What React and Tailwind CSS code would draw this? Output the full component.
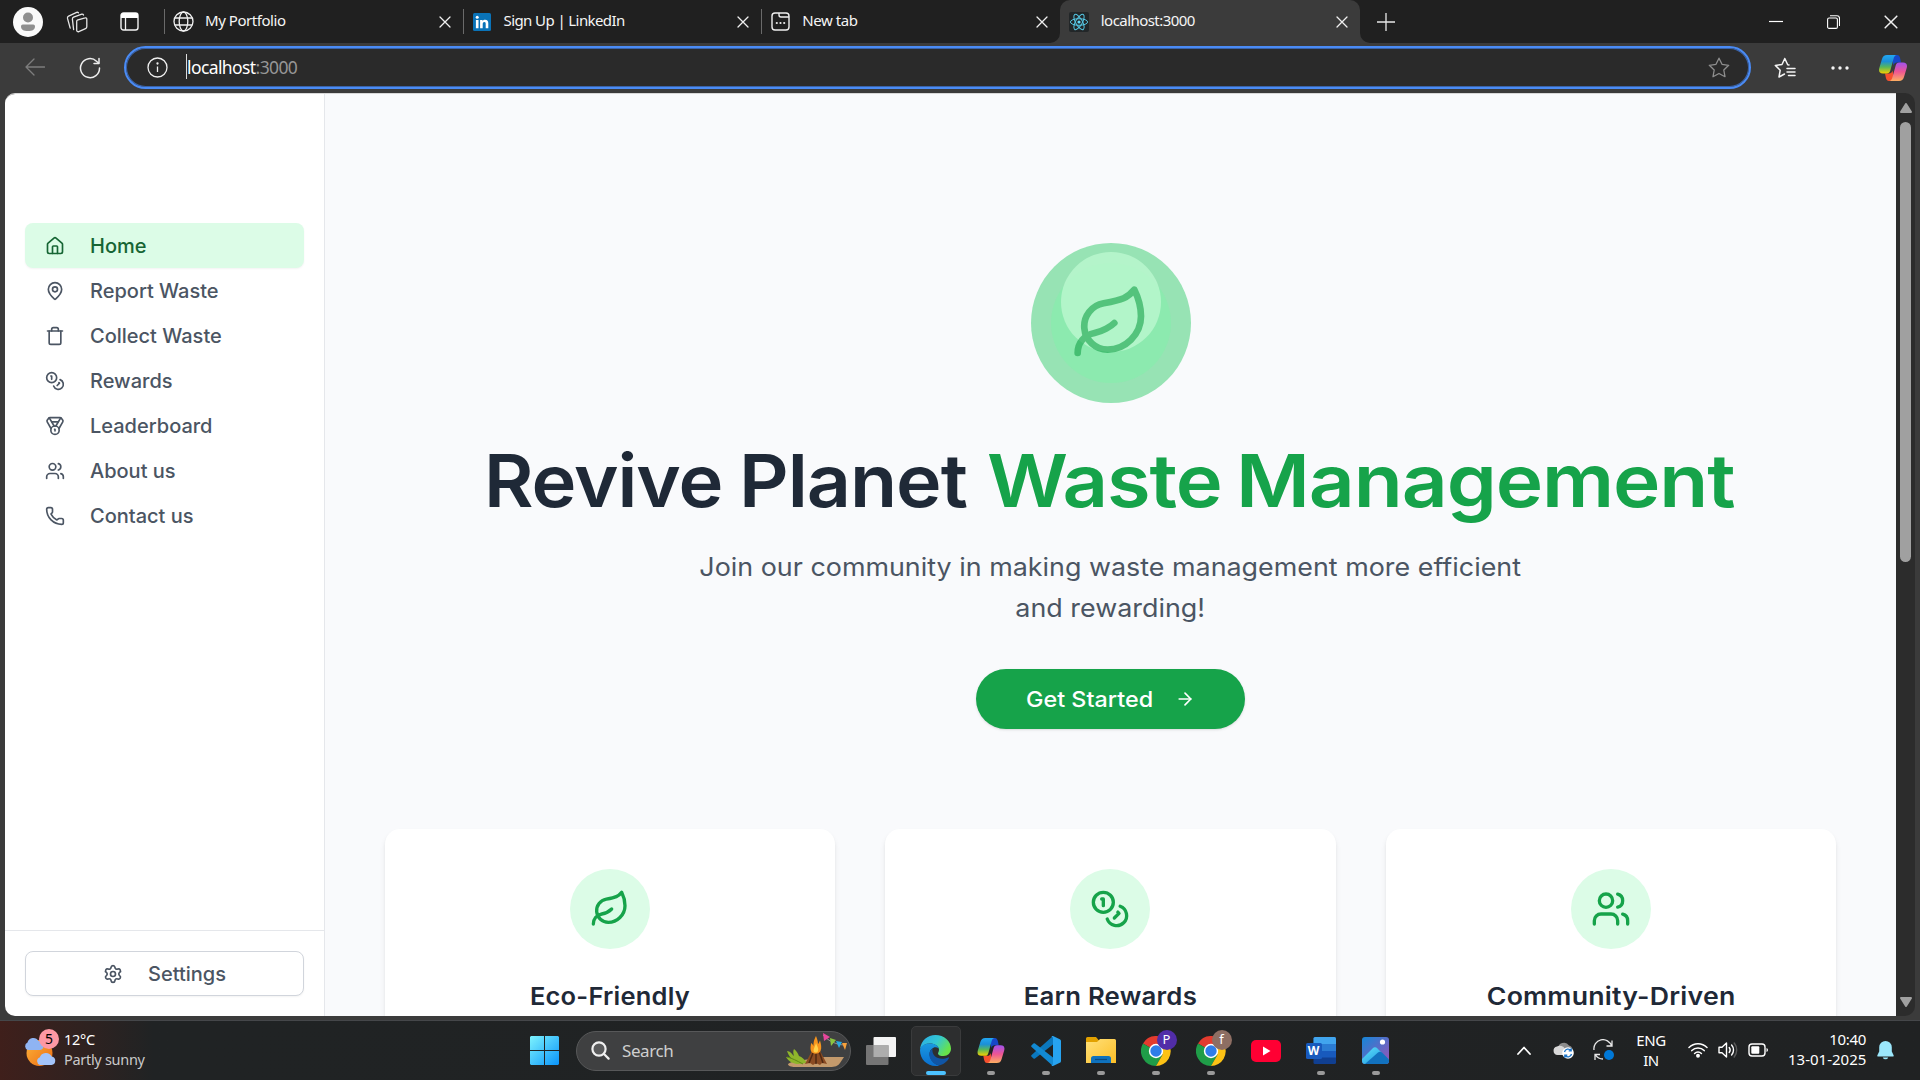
import React from "react";
import {
  House, MapPin, Trash, Coins, Medal, Users, Phone, Settings, Leaf, ArrowRight,
} from "lucide-react";

const UI = "font-['Noto_Sans','Open_Sans',sans-serif]";

/* ---------- Browser icons ---------- */

const CloseX = ({ size = 12 }) => (
  <svg width={size} height={size} viewBox="0 0 12 12" fill="none" stroke="#f0f0f0" strokeWidth="1.3" strokeLinecap="round">
    <path d="M1 1l10 10M11 1L1 11" />
  </svg>
);

const Workspaces = () => (
  <svg width="22" height="22" viewBox="0 0 22 22" fill="none" stroke="#e6e6e6" strokeWidth="1.3" strokeLinejoin="round" strokeLinecap="round">
    <path d="M11.200 9.200l8-2.300a1.200 1.200 0 0 1 1.600 1.200v7.700a2 2 0 0 1-1.300 1.900l-6.700 2.900a1.500 1.500 0 0 1-2.100-1.400v-8.500a1.500 1.500 0 0 1 .5-1.500z" />
    <path d="M7.600 18.500L6.400 8.200a2 2 0 0 1 1.200-2l8.200-3a1.500 1.500 0 0 1 1.700.9" />
    <path d="M4.200 17.200L1.500 7.400a2 2 0 0 1 1.100-2.300L10.700 1.400a1.500 1.500 0 0 1 1.700.3" />
  </svg>
);

const VerticalTabs = () => (
  <svg width="19" height="19" viewBox="0 0 19 19" fill="none">
    <rect x="1" y="1" width="17" height="17" rx="2.500" stroke="#f2f2f2" strokeWidth="1.400" />
    <path d="M1 6V3.500A2.500 2.500 0 0 1 3.500 1h12A2.500 2.500 0 0 1 18 3.500V6z" fill="#fff" />
    <path d="M5.500 6v12" stroke="#f2f2f2" strokeWidth="1.300" />
  </svg>
);

const Globe = () => (
  <svg width="21" height="21" viewBox="0 0 21 21" fill="none" stroke="#f0f0f0" strokeWidth="1.300">
    <circle cx="10.500" cy="10.500" r="9.500" />
    <ellipse cx="10.500" cy="10.500" rx="4.300" ry="9.500" />
    <path d="M1.800 7h17.400M1.800 14h17.400" />
  </svg>
);

const LinkedIn = () => (
  <svg width="18" height="18" viewBox="0 0 18 18">
    <rect width="18" height="18" rx="1.500" fill="#0a73b8" />
    <circle cx="4.200" cy="4.300" r="1.500" fill="#fff" />
    <path d="M2.900 7h2.600v8.200H2.900zM7.100 7h2.500v1.200c.5-.9 1.400-1.400 2.600-1.400 2.200 0 3.100 1.300 3.100 3.700v4.700h-2.600v-4.300c0-1.200-.3-1.900-1.300-1.900-1.100 0-1.700.8-1.700 2v4.200H7.100z" fill="#fff" />
  </svg>
);

const NewTabIcon = () => (
  <svg width="19" height="19" viewBox="0 0 19 19" fill="none" stroke="#f0f0f0" strokeWidth="1.400">
    <rect x="1" y="1" width="17" height="17" rx="3" />
    <path d="M8 1v2a2 2 0 0 0 2 2h8" />
    <g fill="#f0f0f0" stroke="none">
      <circle cx="5.800" cy="11" r="1.100" /><circle cx="9.500" cy="11" r="1.100" /><circle cx="13.200" cy="11" r="1.100" />
    </g>
  </svg>
);

const ReactIcon = () => (
  <svg width="20" height="20" viewBox="0 0 20 20" fill="none">
    <rect width="20" height="20" rx="2" fill="#222628" />
    <g stroke="#55c6e3" strokeWidth="1">
      <ellipse cx="10" cy="10" rx="8.600" ry="3.300" />
      <ellipse cx="10" cy="10" rx="8.600" ry="3.300" transform="rotate(60 10 10)" />
      <ellipse cx="10" cy="10" rx="8.600" ry="3.300" transform="rotate(120 10 10)" />
    </g>
    <circle cx="10" cy="10" r="1.600" fill="#61dafb" />
  </svg>
);

const Copilot = ({ id, w = 28, h = 26 }) => (
  <svg width={w} height={h} viewBox="0 0 28 26">
    <defs>
      <linearGradient id={id + "a"} x1="0" y1="0" x2="0" y2="1">
        <stop offset="0" stopColor="#22a7f2" /><stop offset=".35" stopColor="#1b8fd8" />
        <stop offset=".65" stopColor="#57b75a" /><stop offset="1" stopColor="#f5d000" />
      </linearGradient>
      <linearGradient id={id + "b"} x1="0" y1="0" x2="0" y2="1">
        <stop offset="0" stopColor="#a052ee" /><stop offset=".5" stopColor="#ee5593" />
        <stop offset="1" stopColor="#fdaf62" />
      </linearGradient>
    </defs>
    <path d="M13 0h5c2 0 2.600 1.500 3.200 3.500L22 7.500h-4c-2 0-3 1-3.600 3z" fill="#1747c8" />
    <path d="M15 26h-5c-2 0-2.600-1.500-3.200-3.500L6 18.500h4c2 0 3-1 3.600-3z" fill="#f5502e" />
    <path d="M8 0h9.500c-1.800.4-2.500 2-3 4l-3.200 11.500c-.6 2-1.600 3-3.600 3H4c-3.400 0-4.600-2-3.700-5.500L3 4C3.800 1.300 5.300 0 8 0z" fill={`url(#${id}a)`} />
    <path d="M20 26h-9.500c1.800-.4 2.500-2 3-4l3.200-11.500c.6-2 1.600-3 3.600-3H24c3.400 0 4.600 2 3.700 5.500L25 22c-.8 2.700-2.300 4-5 4z" fill={`url(#${id}b)`} />
  </svg>
);

/* ---------- Browser chrome ---------- */

function Tab({ icon, title, active, titleClass }) {
  return (
    <div
      className={
        "relative flex h-[43px] shrink-0 items-center " +
        (active ? "w-[300px] rounded-t-[10px] bg-[#3b3b3b]" : "w-[298.600px]")
      }
    >
      {!active && <div className="absolute left-0 top-[9px] h-[25px] w-px bg-[#6a6a6a]" />}
      {active && (
        <>
          <svg className="absolute -left-[10px] bottom-0" width="10" height="10"><path d="M10 0v10H0A10 10 0 0 0 10 0z" fill="#3b3b3b" /></svg>
          <svg className="absolute -right-[10px] bottom-0" width="10" height="10"><path d="M0 0v10h10A10 10 0 0 1 0 0z" fill="#3b3b3b" /></svg>
        </>
      )}
      <div className="ml-[9px] flex w-[21px] shrink-0 justify-center">{icon}</div>
      <div className={"ml-[11px] flex-1 whitespace-nowrap pb-[4px] text-[15px] leading-5 text-[#f5f5f5] " + titleClass}>{title}</div>
      <div className="mr-[12px] flex">
        <CloseX />
      </div>
    </div>
  );
}

function TabBar() {
  return (
    <div className={"flex h-[43px] shrink-0 items-center bg-[#202020] " + UI}>
      <div className="ml-[13px] flex h-[30px] w-[30px] items-center justify-center rounded-full bg-[#fafafa]">
        <svg width="16" height="20" viewBox="0 0 16 20" fill="#8f8f8f">
          <circle cx="8" cy="5.500" r="5" />
          <path d="M1 14.200A1.800 1.800 0 0 1 2.800 12.400h10.400A1.800 1.800 0 0 1 15 14.200C15 17.500 12.500 19 8 19s-7-1.500-7-4.800z" />
        </svg>
      </div>
      <div className="ml-[23px]"><Workspaces /></div>
      <div className="ml-[32px]"><VerticalTabs /></div>
      <div className="w-[25px] shrink-0" />
      <Tab icon={<Globe />} title="My Portfolio" titleClass="tracking-[-0.45px]" />
      <Tab icon={<LinkedIn />} title="Sign Up | LinkedIn" titleClass="tracking-[-0.6px]" />
      <Tab icon={<NewTabIcon />} title="New tab" titleClass="tracking-[-0.4px]" />
      <Tab icon={<ReactIcon />} title="localhost:3000" active titleClass="tracking-[-0.55px]" />
      <svg className="ml-[17px]" width="18" height="18" viewBox="0 0 18 18" stroke="#e8e8e8" strokeWidth="1.300"><path d="M9 0v18M0 9h18" /></svg>
      <div className="flex-1" />
      <div className="mr-[22px] flex items-center">
        <svg width="14" height="14" viewBox="0 0 14 14" stroke="#fff" strokeWidth="1.200"><path d="M0 6.500h14" /></svg>
        <svg className="ml-[44px]" width="13" height="14" viewBox="0 0 13 14" fill="none" stroke="#fff" strokeWidth="1.100">
          <rect x=".6" y="3" width="9.800" height="10.400" rx="1.500" />
          <path d="M3 .8h7a2.500 2.500 0 0 1 2.500 2.500v7.700" />
        </svg>
        <div className="ml-[44px]"><CloseX size={14} /></div>
      </div>
    </div>
  );
}

function AddressBar() {
  return (
    <div className={"flex h-[50px] shrink-0 items-center bg-[#3b3b3b] " + UI}>
      <svg className="mb-[2px] ml-[25px]" width="20" height="18" viewBox="0 0 20 18" fill="none" stroke="#7d7d7d" strokeWidth="1.300" strokeLinecap="round" strokeLinejoin="round"><path d="M19.500 9H1M9 1L1 9l8 8" /></svg>
      <svg className="mb-[1px] ml-[34px]" width="22" height="22" viewBox="0 0 22 22" fill="none" stroke="#eee" strokeWidth="1.500" strokeLinecap="round" strokeLinejoin="round">
        <path d="M20.500 11A9.500 9.500 0 1 1 17.500 4.200L19.500 6" /><path d="M20 1.500V6.500h-5" />
      </svg>
      <div className="mb-[1px] ml-[23px] flex h-[43px] w-[1627px] items-center rounded-full border-2 border-[#4a8bf5] bg-[#2a2a2a] pl-[21px] pr-[19px] shadow-[inset_0_0_0_1px_#3a63a8]">
        <svg width="21" height="21" viewBox="0 0 21 21" fill="none" stroke="#f0f0f0" strokeWidth="1.300">
          <circle cx="10.500" cy="10.500" r="9.500" /><path d="M10.500 9.500v5.500" /><circle cx="10.500" cy="6.500" r=".5" fill="#f0f0f0" />
        </svg>
        <div className="mb-[3px] ml-[18px] h-[25px] w-px bg-[#dcdcdc]" />
        <div className="whitespace-nowrap pb-[1px] text-[17.500px] leading-6 tracking-[-0.6px] text-white">
          localhost<span className="text-[#969696]">:3000</span>
        </div>
        <div className="flex-1" />
        <svg width="22" height="21" viewBox="0 0 22 21" fill="none" stroke="#8e8e8e" strokeWidth="1.300" strokeLinejoin="round"><path d="M11 1.200l3 6.100 6.700 1-4.900 4.700 1.200 6.700-6-3.200-6 3.200 1.200-6.700L1.300 8.300l6.700-1z" /></svg>
      </div>
      <svg className="ml-[23px]" width="22" height="22" viewBox="0 0 22 22" fill="none" stroke="#f5f5f5" strokeWidth="1.500" strokeLinejoin="round" strokeLinecap="round">
        <path d="M15 8l-1.300-.2L10.800 1.500 8 7.500 1.300 8.400l4.900 4.800L5 20l5.500-3" /><path d="M13 11.500h8M13 15h8M14.500 18.500H21" />
      </svg>
      <svg className="mb-[1px] ml-[35px]" width="18" height="4" viewBox="0 0 18 4" fill="#f5f5f5"><circle cx="2" cy="2" r="1.700" /><circle cx="9" cy="2" r="1.700" /><circle cx="16" cy="2" r="1.700" /></svg>
      <div className="ml-[30px]"><Copilot id="cpA" /></div>
    </div>
  );
}

/* ---------- Web page ---------- */

const NAV = [
  { label: "Home", Icon: House, active: true },
  { label: "Report Waste", Icon: MapPin },
  { label: "Collect Waste", Icon: Trash },
  { label: "Rewards", Icon: Coins },
  { label: "Leaderboard", Icon: Medal },
  { label: "About us", Icon: Users },
  { label: "Contact us", Icon: Phone },
];

function Sidebar() {
  return (
    <aside className="flex w-[320px] shrink-0 flex-col border-r border-gray-200 bg-white font-['Inter',sans-serif] text-[20px] font-medium text-[#4b5563]">
      <nav className="flex flex-1 flex-col px-[20px] pt-[129px]">
        {NAV.map(({ label, Icon, active }) => (
          <a
            key={label}
            className={
              "flex h-[45px] items-center rounded-[8px] pl-[20px] " +
              (active ? "bg-[#dcfce7] text-[#166534] shadow-xs" : "")
            }
          >
            <Icon size={20} />
            <span className="ml-[25px]">{label}</span>
          </a>
        ))}
      </nav>
      <div className="h-[86px] border-t border-gray-200 px-[20px] pt-[20px]">
        <button className="flex h-[45px] w-full items-center justify-center rounded-[8px] border border-gray-300 bg-white shadow-xs">
          <Settings size={20} />
          <span className="ml-[25px]">Settings</span>
        </button>
      </div>
    </aside>
  );
}

const FEATURES = [
  { title: "Eco-Friendly", Icon: Leaf, stretch: "scale-x-[1.04]" },
  { title: "Earn Rewards", Icon: Coins, stretch: "scale-x-[1.052]" },
  { title: "Community-Driven", Icon: Users, stretch: "scale-x-[1.09]" },
];

function Main() {
  return (
    <main className="flex flex-1 flex-col items-center overflow-hidden bg-[#f9fafc] px-[60px] pt-[149px] font-['Inter',sans-serif]">
      <div className="relative h-[160px] w-[160px] shrink-0 rounded-full bg-[#97e3b4]">
        <div className="absolute inset-[20px] rounded-full bg-[#86efac] opacity-60" />
        <div className="absolute left-[30px] top-[9px] h-[100px] w-[100px] rounded-full bg-[#bbf7d0] opacity-80" />
        <Leaf size={80} className="absolute left-[40px] top-[40px] text-[#16a34a] opacity-60" />
      </div>
      <h1 className="mt-[32px] flex h-[90px] w-[1254px] shrink-0 items-center whitespace-nowrap text-[73px] font-semibold leading-none tracking-[-1px] text-[#1f2937]">
        <span className="w-[255.500px] origin-left scale-x-[1.04]">Revive</span>
        <span className="w-[248px] origin-left scale-x-[1.056]">Planet</span>
        <span className="w-[249px] origin-left scale-x-[1.088] text-[#16a34a]">Waste</span>
        <span className="w-[501px] origin-left scale-x-[1.098] text-[#16a34a]">Management</span>
      </h1>
      <p className="mt-[22px] shrink-0 scale-x-[1.075] whitespace-nowrap text-center text-[25px] leading-[41px] text-[#4b5563]">
        Join our community in making waste management more efficient
        <br />
        and rewarding!
      </p>
      <button className="mt-[40px] flex h-[60px] w-[269px] shrink-0 items-center rounded-full bg-[#16a34a] pl-[50px] text-[22px] font-medium text-white shadow-sm">
        <span className="origin-left scale-x-[1.062]">Get Started</span>
        <ArrowRight size={20} className="ml-auto mr-[50px]" />
      </button>
      <section className="mt-[100px] grid w-full shrink-0 grid-cols-3 gap-[50px]">
        {FEATURES.map(({ title, Icon, stretch }) => (
          <div key={title} className="flex h-[300px] flex-col items-center rounded-[15px] bg-white pt-[40px] shadow-md">
            <div className="flex h-[80px] w-[80px] items-center justify-center rounded-full bg-[#dcfce7] text-[#16a34a]">
              <Icon size={40} />
            </div>
            <h3 className={"mt-[30px] whitespace-nowrap text-[24.500px] font-semibold leading-[35px] tracking-[0.2px] text-[#1f2937] " + stretch}>{title}</h3>
          </div>
        ))}
      </section>
    </main>
  );
}

function Scrollbar() {
  return (
    <div className="flex w-[19px] shrink-0 flex-col items-center rounded-r-[10px] bg-[#2c2c2c]">
      <svg className="mt-[10px]" width="12" height="10" viewBox="0 0 12 10"><path d="M6 1L11 9H1z" fill="#a0a0a0" stroke="#a0a0a0" strokeWidth="2" strokeLinejoin="round" /></svg>
      <div className="mt-[9px] h-[440px] w-[11px] rounded-full bg-[#a0a0a0]" />
      <div className="flex-1" />
      <svg className="mb-[9px]" width="12" height="10" viewBox="0 0 12 10"><path d="M6 9L11 1H1z" fill="#a0a0a0" stroke="#a0a0a0" strokeWidth="2" strokeLinejoin="round" /></svg>
    </div>
  );
}

/* ---------- Taskbar ---------- */

const StartIcon = () => (
  <svg width="29" height="29" viewBox="0 0 29 29">
    <defs><linearGradient id="st" x1="0" y1="0" x2="29" y2="29" gradientUnits="userSpaceOnUse"><stop offset="0" stopColor="#7df3fd" /><stop offset="1" stopColor="#0a94fa" /></linearGradient></defs>
    <path fill="url(#st)" d="M1 0h13v14H0V1zM15 0h13l1 1v13H15zM0 15h14v14H1l-1-1zM15 15h14v13l-1 1H15z" />
  </svg>
);

const Campfire = () => (
  <svg width="62" height="36" viewBox="0 0 62 36">
    <path d="M3 31c4-3 10-3 16-4 8-1 14-3 21-3h19l-4 6c-2 3-5 4-10 4H10c-4 0-7-1-7-3z" fill="#c49a6c" />
    <path d="M13 31c-4 0-9-2-12-7 3 0 4 1 6 2-3-3-4-5-5-8 3 0 5 3 7 5-1-3-1-5 0-7 3 2 4 5 5 7 3 1 6 4 8 7z" fill="#8fb52b" />
    <path d="M2 24c5 1 10 4 16 7" stroke="#5f8a14" fill="none" />
    <path d="M20 31l9-17h4l9 17-5-1-2 2-4-2-3 2-3-2z" fill="#8a4b22" />
    <path d="M24 30l6-15M31 31V14M38 30l-5-15" stroke="#4f2812" strokeWidth="1.500" />
    <path d="M26 18c-1-4 0-5 0-8 1.500 1 2 2 2.500 3 0-5 1-7 2.500-10 1 3 2 5 2 8 1-1 1.500-2.500 2-3.500 1 4 2 7 .5 10.500-2 3.500-8 3.500-9.500 0z" fill="#f7941d" />
    <path d="M28.500 18c0-3 2-5 2.500-8 1 3 3 5.500 2 8-1 2-3.500 2-4.500 0z" fill="#ffd24a" />
    <path d="M38 2c5 6 14 10 22 10" stroke="#b9b9b9" strokeWidth=".7" fill="none" />
    <path d="M38 0l7 4-6 4z" fill="#e8459c" /><path d="M45 5l6 2-5 6z" fill="#8bc53f" /><path d="M51 8l6 1-3 6z" fill="#29abe2" /><path d="M57 10h5l-2 7z" fill="#f7a13b" />
  </svg>
);

const TaskView = () => (
  <svg width="30" height="28" viewBox="0 0 30 28">
    <rect x="7.500" width="22.500" height="20" rx="1" fill="#f4f4f4" />
    <rect y="8" width="22.500" height="20" rx="1" fill="#757575" />
    <rect x="7.500" y="8" width="15" height="12" fill="#adadad" />
  </svg>
);

const Edge = () => (
  <svg width="31" height="31" viewBox="0 0 31 31">
    <defs>
      <linearGradient id="eg1" x1="0" y1="0" x2="1" y2=".5"><stop offset="0" stopColor="#2aa9e6" /><stop offset=".55" stopColor="#33c7d3" /><stop offset="1" stopColor="#67e34a" /></linearGradient>
      <linearGradient id="eg2" x1="0" y1="0" x2="0" y2="1"><stop offset="0" stopColor="#1a98df" /><stop offset="1" stopColor="#0a6fd0" /></linearGradient>
    </defs>
    <path d="M0 14C1 5.500 7.500 0 15.500 0 24 0 31 6.200 31 13.600c0 4.600-3.300 7.400-7.400 7.400-3 0-5.600-1-5.600-2.600 0-1 1-1.500 1-3.700C19 11 14.500 8.500 10 8.500 5.500 8.500 2 10.500 0 14z" fill="url(#eg1)" />
    <path d="M0 15.500C0 11 4.500 8.500 10 8.500c4.500 0 8 2 9 5-2-1.300-4-1.500-5.500-.7C10 14.500 9 18 10 21.500c1 4 4.500 8 9.500 9-1.300.4-2.700.5-4 .5C7 31 0 24 0 15.500z" fill="url(#eg2)" />
    <path d="M12.500 13.500C9 16 8.500 20 10.500 24c2 4 6 6.500 9.500 6.300 3.500-1 7.500-4 9-7.300.2-.6-.3-.8-.8-.5-2 1-4 1.300-6 1.300-6 0-10.700-4-9.700-10.300z" fill="#1055a5" />
  </svg>
);

const VSCode = () => (
  <svg width="30" height="30" viewBox="0 0 30 30">
    <path d="M22 0v8.500L4 22.500c-.6.400-1 .4-1.500 0L.6 20.800c-.6-.6-.6-1.200 0-1.700z" fill="#0b77bd" />
    <path d="M22 30v-8.500L4 7.500c-.6-.4-1-.4-1.500 0L.6 9.200c-.6.600-.6 1.200 0 1.700z" fill="#1289d2" />
    <path d="M22 0l6.800 3.200c.8.400 1.200 1 1.200 1.900v19.800c0 .9-.4 1.500-1.200 1.900L22 30c-.8.200-1.300 0-1.500-.5l1.500-1V1.500l-1.500-1C20.700 0 21.200-.2 22 0z" fill="#27a3f0" />
  </svg>
);

const Folder = () => (
  <svg width="30" height="27" viewBox="0 0 30 27">
    <defs><linearGradient id="fo" x1="0" y1="0" x2="1" y2="1"><stop offset="0" stopColor="#ffe07a" /><stop offset="1" stopColor="#fcbf26" /></linearGradient></defs>
    <path d="M0 1.500A1.500 1.500 0 0 1 1.500 0H10l3 3.500V6H0z" fill="#e2a100" />
    <path d="M0 5h11l3-3h14.500A1.500 1.500 0 0 1 30 3.500V26H0z" fill="url(#fo)" />
    <path d="M5 26v-4.500A2.500 2.500 0 0 1 7.500 19h15a2.500 2.500 0 0 1 2.500 2.500V26z" fill="#0f72bd" />
    <path d="M9 22.500h12" stroke="#0a4a80" strokeWidth="1.200" />
  </svg>
);

const Chrome = ({ letter, color }) => (
  <div className="relative h-[30px] w-[30px]">
    <svg width="30" height="30" viewBox="0 0 30 30">
      <path d="M15 15L2 7.500A15 15 0 0 1 28 7.500L28 8H15z" fill="#e33b2e" />
      <path d="M15 15L2 7.500A15 15 0 0 0 15 30l6.500-11.300z" fill="#1f9d48" />
      <path d="M15 8h13a15 15 0 0 1-13 22l6.500-11.300z" fill="#fcc215" />
      <circle cx="15" cy="15" r="7.200" fill="#fff" /><circle cx="15" cy="15" r="5.700" fill="#2f7de9" />
    </svg>
    <div className={"absolute -top-[6px] left-[16px] flex h-[20px] w-[20px] items-center justify-center rounded-full text-[13px] leading-none text-white " + color}>{letter}</div>
  </div>
);

const YouTube = () => (
  <svg width="30" height="22" viewBox="0 0 30 22"><rect width="30" height="22" rx="5" fill="#ff0033" /><path d="M12 6.500l7.500 4.500-7.500 4.500z" fill="#fff" /></svg>
);

const Word = () => (
  <div className="relative h-[27px] w-[30px]">
    <svg width="30" height="27" viewBox="0 0 30 27">
      <rect x="7.500" width="22.500" height="27" rx="1.500" fill="#103f91" />
      <path d="M7.500 1.500A1.500 1.500 0 0 1 9 0h19.500A1.500 1.500 0 0 1 30 1.500V7H7.500z" fill="#41a5ee" />
      <path d="M7.500 7H30v7H7.500z" fill="#2b7cd3" /><path d="M7.500 14H30v6.500H7.500z" fill="#185abd" />
      <rect x="0" y="6" width="16" height="16" rx="1.500" fill="#185abd" />
    </svg>
    <div className="absolute left-0 top-[6px] w-[16px] text-center text-[12px] font-bold leading-[16px] text-white">W</div>
  </div>
);

const Photos = () => (
  <svg width="27" height="27" viewBox="0 0 27 27">
    <defs>
      <linearGradient id="ph" x1="0" y1="0" x2="1" y2="1"><stop offset="0" stopColor="#1487d8" /><stop offset="1" stopColor="#9c52b5" /></linearGradient>
      <linearGradient id="ph2" x1="0" y1="0" x2="1" y2="1"><stop offset="0" stopColor="#5fe3fb" /><stop offset="1" stopColor="#148bdc" /></linearGradient>
    </defs>
    <rect width="27" height="27" rx="3" fill="url(#ph)" />
    <path d="M0 22l10.500-10.500a3.500 3.500 0 0 1 5 0L27 23a4 4 0 0 1-3.500 4H3.500A3.500 3.500 0 0 1 0 23.500z" fill="url(#ph2)" />
    <path d="M3 27L16 15.500a3.500 3.500 0 0 1 4 0L27 22.500V24a3 3 0 0 1-3 3z" fill="#1272bf" />
    <circle cx="20.500" cy="5" r="2.600" fill="#fff" />
  </svg>
);

const Slot = ({ children, dot = true }) => (
  <div className="relative flex h-[60px] w-[55px] shrink-0 items-center justify-center">
    {children}
    {dot && <div className="absolute bottom-[6px] left-[23.500px] h-[4px] w-[8px] rounded-full bg-[#9a9a9a]" />}
  </div>
);

const WeatherIcon = () => (
  <svg width="36" height="36" viewBox="0 0 36 36">
    <defs><linearGradient id="sun" x1="0" y1="0" x2="1" y2="1"><stop offset="0" stopColor="#fbb33b" /><stop offset="1" stopColor="#ee6c11" /></linearGradient></defs>
    <circle cx="15.500" cy="21" r="13" fill="url(#sun)" />
    <path d="M4 18a4 4 0 0 1-.5-7.500A6 6 0 0 1 14.500 9 4.500 4.500 0 0 1 16 18z" fill="#8fb4f3" />
    <path d="M16 33a4 4 0 0 1-.3-7.600 6.500 6.500 0 0 1 12-.9A4.300 4.300 0 0 1 27.500 33z" fill="#a3c4fa" />
  </svg>
);

function Taskbar() {
  return (
    <div className={"flex h-[60px] shrink-0 items-center border-t border-[#45474a] bg-linear-to-r from-[#3f1f1b] from-0% via-[#202324] via-8% to-[#202223] text-white " + UI}>
      <div className="flex w-[530px] shrink-0 items-center pb-[2px]">
        <div className="relative ml-[24px] h-[36px] w-[36px]">
          <WeatherIcon />
          <div className="absolute -top-[3px] left-[15px] flex h-[20px] w-[20px] items-center justify-center rounded-full bg-[#fd98a4] text-[14px] leading-none text-black">5</div>
        </div>
        <div className="ml-[4px] pb-[2px] text-[14.500px] leading-[20px] tracking-[-0.3px]">
          <div>12°C</div>
          <div className="text-[#c9c9c9]">Partly sunny</div>
        </div>
      </div>
      <StartIcon />
      <div className="ml-[17px] flex h-[40px] w-[275px] shrink-0 items-center rounded-full border border-[#575859] bg-[#3f4041] pl-[14px]">
        <svg width="19" height="19" viewBox="0 0 19 19" fill="none" stroke="#f0f0f0" strokeWidth="2.200" strokeLinecap="round"><circle cx="8" cy="8" r="6.600" fill="#5a5b5c" /><path d="M13 13l4.600 4.600" /></svg>
        <div className="ml-[12px] text-[17px] tracking-[-0.4px] text-[#cfcfcf]">Search</div>
        <div className="ml-auto mr-[3px]"><Campfire /></div>
      </div>
      <div className="ml-[2px] flex">
        <Slot dot={false}><TaskView /></Slot>
        <div className="relative flex h-[60px] w-[55px] items-center justify-center">
          <div className="flex h-[50px] w-[50px] items-center justify-center rounded-[5px] border border-[#3a3b3c] bg-[#2d2e2f]"><Edge /></div>
          <div className="absolute bottom-[6px] left-[17.500px] h-[4px] w-[20px] rounded-full bg-[#4cc2ff]" />
        </div>
        <Slot><Copilot id="cpB" w={28} h={25} /></Slot>
        <Slot><VSCode /></Slot>
        <Slot><Folder /></Slot>
        <Slot><Chrome letter="P" color="bg-[#512da8]" /></Slot>
        <Slot><Chrome letter="f" color="bg-[#8d6e63]" /></Slot>
        <Slot dot={false}><YouTube /></Slot>
        <Slot><Word /></Slot>
        <Slot><Photos /></Slot>
      </div>
      <div className="flex-1" />
      <div className="mr-[26px] flex items-center pb-[1px] text-[15px] leading-[20px]">
        <svg width="14" height="9" viewBox="0 0 14 9" fill="none" stroke="#fff" strokeWidth="1.800" strokeLinecap="round" strokeLinejoin="round"><path d="M1 8l6-6.500L13 8" /></svg>
        <svg className="ml-[22px]" width="22" height="18" viewBox="0 0 22 18">
          <path d="M5 8a6 6 0 0 1 11-3.500A5 5 0 0 1 19 12H8z" fill="#8c8c8c" />
          <path d="M4.500 14A4.300 4.300 0 0 1 4 5.500 6 6 0 0 1 12 8l4 6z" fill="#d8d8d8" />
          <circle cx="15" cy="12" r="5.800" fill="#fff" />
          <path d="M11.500 11a3.700 3.700 0 0 1 6.500-1.500M18.500 13a3.700 3.700 0 0 1-6.500 1.500M18.200 7.300v2.500h-2.500M11.800 16.700v-2.500h2.500" stroke="#1a73c7" strokeWidth="1.300" fill="none" />
        </svg>
        <svg className="ml-[18px]" width="22" height="22" viewBox="0 0 22 22" fill="none" stroke="#e8e8e8" strokeWidth="1.300">
          <path d="M1 11a9 9 0 0 1 17.500-4M19 1.500V7h-5.500M10 20a9 9 0 0 1-7.500-4M2 21v-5.500h5" />
          <circle cx="16" cy="16" r="5" fill="#0078d7" stroke="none" />
        </svg>
        <div className="ml-[21px] w-[30px] pb-[1px] text-center tracking-[-0.4px]"><div>ENG</div><div>IN</div></div>
        <svg className="ml-[22px]" width="20" height="16" viewBox="0 0 20 16" fill="none" stroke="#fff" strokeWidth="1.500" strokeLinecap="round">
          <path d="M1 5.500a12.500 12.500 0 0 1 18 0M3.800 8.600a8.600 8.600 0 0 1 12.400 0M6.600 11.500a4.800 4.800 0 0 1 6.800 0" /><circle cx="10" cy="13.800" r="1.200" fill="#fff" />
        </svg>
        <svg className="ml-[10px]" width="20" height="18" viewBox="0 0 20 18" fill="none" stroke="#fff" strokeWidth="1.400" strokeLinejoin="round" strokeLinecap="round">
          <path d="M1 6.200h3L8.500 2v14L4 11.800H1z" /><path d="M11.200 6.500a4 4 0 0 1 0 5M13.600 4a7.500 7.500 0 0 1 0 10" /><path d="M16.200 2a11 11 0 0 1 0 14" stroke="#5a5a5a" />
        </svg>
        <svg className="ml-[10px]" width="21" height="14" viewBox="0 0 21 14" fill="none" stroke="#fff" strokeWidth="1.400">
          <rect x="1" y="1" width="16" height="12" rx="3" /><rect x="3.300" y="3.300" width="8" height="7.400" rx="1" fill="#fff" stroke="none" /><path d="M18.500 5v4a2 2 0 0 0 1.500-2 2 2 0 0 0-1.500-2z" fill="#fff" stroke="none" />
        </svg>
        <div className="ml-[19px] w-[78px] whitespace-nowrap pb-[3px] text-right"><div className="tracking-[-0.3px]">10:40</div><div>13-01-2025</div></div>
        <svg className="ml-[11px]" width="17" height="19" viewBox="0 0 17 19" fill="#9be7fb">
          <path d="M8.500 0A6.300 6.300 0 0 0 2.200 6.300V10.500L.4 14.200c-.3.700 0 1.300.8 1.300h14.600c.8 0 1.100-.6.8-1.300L14.800 10.500V6.300A6.300 6.300 0 0 0 8.500 0z" /><path d="M5.800 16.500h5.400a2.800 2.500 0 0 1-5.400 0z" />
        </svg>
      </div>
    </div>
  );
}

export default function App() {
  return (
    <div className="flex h-[1080px] w-[1920px] flex-col overflow-hidden bg-[#3b3b3b]">
      <TabBar />
      <AddressBar />
      <div className="flex h-[923px] shrink-0 pl-[5px]">
        <div className="flex w-[1891px] overflow-hidden rounded-l-[10px] border-t border-[#d8d8d8]">
          <Sidebar />
          <Main />
        </div>
        <Scrollbar />
      </div>
      <div className="h-[4px] shrink-0" />
      <Taskbar />
    </div>
  );
}
